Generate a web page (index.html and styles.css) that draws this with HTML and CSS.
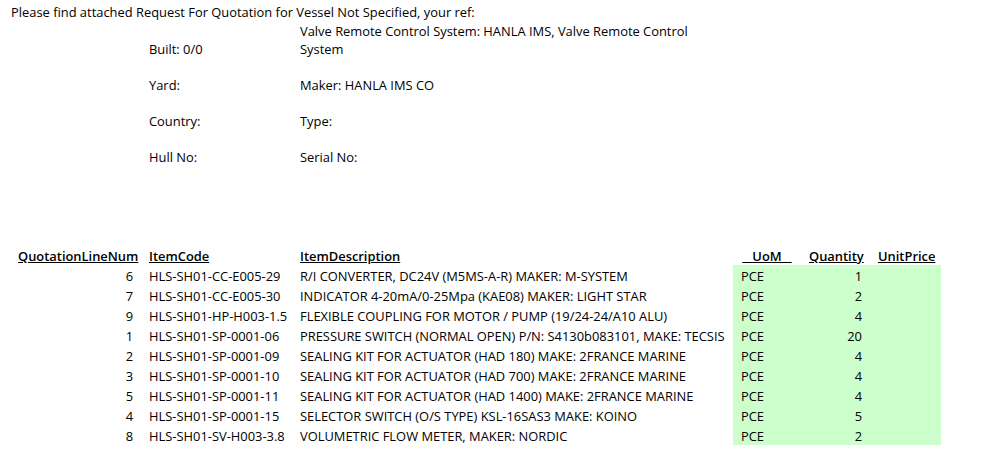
FILE: index.html
```html
<!DOCTYPE html>
<html>
<head>
<meta charset="utf-8">
<link rel="stylesheet" href="styles.css">
</head>
<body>
<div class="page">
  <p class="intro">Please find attached Request For Quotation for Vessel Not Specified, your ref:</p>
  <div class="info">
    <div class="info-row first">
      <div class="info-label">Built: 0/0</div>
      <div class="info-value">Valve Remote Control System: HANLA IMS, Valve Remote Control System</div>
    </div>
    <div class="info-row">
      <div class="info-label">Yard:</div>
      <div class="info-value">Maker: HANLA IMS CO</div>
    </div>
    <div class="info-row">
      <div class="info-label">Country:</div>
      <div class="info-value">Type:</div>
    </div>
    <div class="info-row">
      <div class="info-label">Hull No:</div>
      <div class="info-value">Serial No:</div>
    </div>
  </div>

  <table class="items">
    <colgroup>
      <col class="c-num"><col class="c-code"><col class="c-desc"><col class="c-uom"><col class="c-qty"><col class="c-price">
    </colgroup>
    <thead>
      <tr>
        <th class="num"><span class="u">QuotationLineNum</span></th>
        <th><span class="u">ItemCode</span></th>
        <th><span class="u">ItemDescription</span></th>
        <th class="center"><span class="u">&nbsp;&nbsp;&nbsp;UoM&nbsp;&nbsp;&nbsp;</span></th>
        <th class="num"><span class="u">Quantity</span></th>
        <th><span class="u">UnitPrice</span></th>
      </tr>
    </thead>
    <tbody>
      <tr><td class="num">6</td><td>HLS-SH01-CC-E005-29</td><td>R/I CONVERTER, DC24V (M5MS-A-R) MAKER: M-SYSTEM</td><td class="g">PCE</td><td class="g num">1</td><td class="g"></td></tr>
      <tr><td class="num">7</td><td>HLS-SH01-CC-E005-30</td><td>INDICATOR 4-20mA/0-25Mpa (KAE08) MAKER: LIGHT STAR</td><td class="g">PCE</td><td class="g num">2</td><td class="g"></td></tr>
      <tr><td class="num">9</td><td>HLS-SH01-HP-H003-1.5</td><td>FLEXIBLE COUPLING FOR MOTOR / PUMP (19/24-24/A10 ALU)</td><td class="g">PCE</td><td class="g num">4</td><td class="g"></td></tr>
      <tr><td class="num">1</td><td>HLS-SH01-SP-0001-06</td><td>PRESSURE SWITCH (NORMAL OPEN) P/N: S4130b083101, MAKE: TECSIS</td><td class="g">PCE</td><td class="g num">20</td><td class="g"></td></tr>
      <tr><td class="num">2</td><td>HLS-SH01-SP-0001-09</td><td>SEALING KIT FOR ACTUATOR (HAD 180) MAKE: 2FRANCE MARINE</td><td class="g">PCE</td><td class="g num">4</td><td class="g"></td></tr>
      <tr><td class="num">3</td><td>HLS-SH01-SP-0001-10</td><td>SEALING KIT FOR ACTUATOR (HAD 700) MAKE: 2FRANCE MARINE</td><td class="g">PCE</td><td class="g num">4</td><td class="g"></td></tr>
      <tr><td class="num">5</td><td>HLS-SH01-SP-0001-11</td><td>SEALING KIT FOR ACTUATOR (HAD 1400) MAKE: 2FRANCE MARINE</td><td class="g">PCE</td><td class="g num">4</td><td class="g"></td></tr>
      <tr><td class="num">4</td><td>HLS-SH01-SP-0001-15</td><td>SELECTOR SWITCH (O/S TYPE) KSL-16SAS3 MAKE: KOINO</td><td class="g">PCE</td><td class="g num">5</td><td class="g"></td></tr>
      <tr><td class="num">8</td><td>HLS-SH01-SV-H003-3.8</td><td>VOLUMETRIC FLOW METER, MAKER: NORDIC</td><td class="g">PCE</td><td class="g num">2</td><td class="g"></td></tr>
    </tbody>
  </table>
</div>
</body>
</html>
```
FILE: styles.css
```css
html, body {
  margin: 0;
  padding: 0;
  background: #ffffff;
}

body {
  font-family: "Open Sans", "Liberation Sans", sans-serif;
  font-size: 12.9px;
  line-height: 18px;
  color: #000000;
}

.page {
  padding: 3px 0 0 10px;
}

.intro {
  margin: 0;
  padding-left: 1px;
}

.info {
  display: flex;
  flex-direction: column;
  gap: 18px;
  padding-left: 139px;
}

.info-row {
  display: grid;
  grid-template-columns: 151px 395px;
  align-items: end;
}

.info-row.first {
  padding-top: 1px;
}

.items {
  border-collapse: collapse;
  table-layout: fixed;
  width: 931px;
  margin-top: 81px;
}

.c-num { width: 131px; }
.c-code { width: 151px; }
.c-desc { width: 441px; }
.c-uom { width: 68px; }
.c-qty { width: 69px; }
.c-price { width: 71px; }

.items th,
.items td {
  text-align: left;
  white-space: nowrap;
  vertical-align: top;
}

.items th {
  font-weight: 600;
  padding: 0 8px;
  height: 18px;
  line-height: 18px;
}

.items td {
  padding: 3px 8px 0;
  height: 17px;
  line-height: 17px;
}

.items .num {
  text-align: right;
}

.items .center {
  text-align: center;
}

.u {
  text-decoration: underline;
}

.items td.g {
  background: #ccffcc;
}
```
